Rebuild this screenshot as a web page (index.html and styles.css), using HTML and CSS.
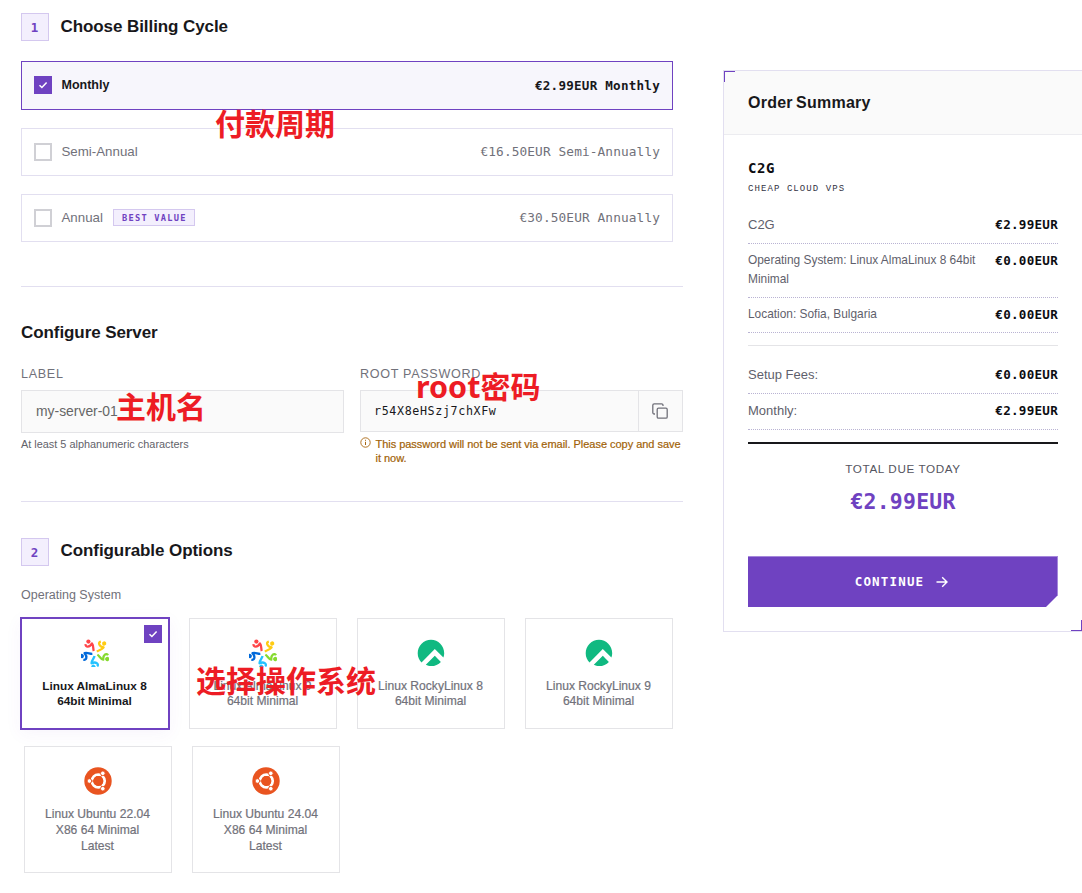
FILE: index.html
```html
<!DOCTYPE html>
<html lang="en">
<head>
<meta charset="utf-8">
<title>Configure Server</title>
<link rel="stylesheet" href="styles.css">
</head>
<body>
<svg class="defs" width="0" height="0" aria-hidden="true">
  <symbol id="check" viewBox="0 0 18 18"><path d="M5.5 9.2l2.4 2.3 4.7-5" fill="none" stroke="#fff" stroke-width="1.5"/></symbol>
  <symbol id="petal-shape" viewBox="0 0 28 28" overflow="visible"><circle cx="7.4" cy="2.6" r="2.1"/><path d="M4.600 5.200C4.200 8.400 8.600 8.600 11 4.400C12.800 6.400 11.800 9.600 12.800 12" fill="none" stroke="currentColor" stroke-width="2.300" stroke-linejoin="round"/></symbol>
  <symbol id="alma" viewBox="0 0 28 28">
    <use href="#petal-shape" width="28" height="28" fill="#ff4649" color="#ff4649"/>
    <use href="#petal-shape" width="28" height="28" fill="#ffcb12" color="#ffcb12" transform="rotate(72 14 14.4)"/>
    <use href="#petal-shape" width="28" height="28" fill="#86da2f" color="#86da2f" transform="rotate(144 14 14.4)"/>
    <use href="#petal-shape" width="28" height="28" fill="#24c2ff" color="#24c2ff" transform="rotate(216 14 14.4)"/>
    <use href="#petal-shape" width="28" height="28" fill="#0069da" color="#0069da" transform="rotate(288 14 14.4)"/>
  </symbol>
  <symbol id="rocky" viewBox="0 0 28 28"><path fill="#10b981" d="M26.400 18.400c.5-1.300.8-2.800.8-4.200C27.200 6.800 21.300.8 14 .8S.7 6.800.7 14.200c0 3.600 1.400 6.900 3.800 9.300L17.800 10.100z"/><path fill="#10b981" d="M23.900 22.900l-6.100-6.100-9 8.900c1.600.9 3.400 1.400 5.300 1.400 3.900 0 7.400-1.600 9.800-4.200z"/></symbol>
  <symbol id="ubuntu" viewBox="0 0 28 28">
    <circle cx="14" cy="14" r="13.700" fill="#e95420"/>
    <circle cx="14.300" cy="14" r="6.400" fill="none" stroke="#fff" stroke-width="2.700"/>
    <g stroke="#e95420" stroke-width="1"><path d="M14.300 14H4M14.300 14l5.300 9.200M14.300 14l5.300-9.200"/></g>
    <circle cx="14.300" cy="14" r="4.900" fill="#e95420"/>
    <g fill="#fff" stroke="#e95420" stroke-width=".9"><circle cx="5.400" cy="14" r="2.300"/><circle cx="18.800" cy="6.300" r="2.300"/><circle cx="18.800" cy="21.700" r="2.300"/></g>
  </symbol>
</svg>
<div class="page">
  <main class="main">
    <header class="step"><span class="num">1</span><h2>Choose Billing Cycle</h2></header>
    <div class="cycles">
      <div class="cycle active"><span class="box"><svg width="18" height="18"><use href="#check"/></svg></span><span class="name">Monthly</span><span class="price">€2.99EUR Monthly</span></div>
      <div class="cycle"><span class="box"></span><span class="name">Semi-Annual</span><span class="price">€16.50EUR Semi-Annually</span></div>
      <div class="cycle"><span class="box"></span><span class="name">Annual</span><span class="best">BEST VALUE</span><span class="price">€30.50EUR Annually</span></div>
    </div>
    <hr class="rule rule-a">
    <h2 class="server-title">Configure Server</h2>
    <div class="fields">
      <div class="field">
        <div class="label">LABEL</div>
        <div class="input">my-server-01</div>
        <div class="help">At least 5 alphanumeric characters</div>
      </div>
      <div class="field">
        <div class="label">ROOT PASSWORD</div>
        <div class="group">
          <div class="secret">r54X8eHSzj7chXFw</div>
          <div class="copy"><svg width="16" height="16" viewBox="0 0 16 16" fill="none" stroke="#71717a" stroke-width="1.300"><rect x="5.200" y="5.200" width="10" height="10" rx="1.300"/><path d="M3 11H2.200A1.400 1.400 0 0 1 .8 9.600V2.200A1.400 1.400 0 0 1 2.200.8h7.400A1.400 1.400 0 0 1 11 2.200V3"/></svg></div>
        </div>
        <div class="warn"><svg width="11" height="11" viewBox="0 0 11 11" fill="none" stroke="#a8650f"><circle cx="5.500" cy="5.500" r="4.700" stroke-width=".9"/><path d="M5.500 4.800v3.200M5.500 2.800v1"/></svg><p>This password will not be sent via email. Please copy and save<br>it now.</p></div>
      </div>
    </div>
    <hr class="rule">
    <header class="step step-b"><span class="num">2</span><h2>Configurable Options</h2></header>
    <div class="os-label">Operating System</div>
    <div class="cards">
      <div class="card chosen"><span class="tick"><svg width="18" height="18"><use href="#check"/></svg></span><svg class="logo"><use href="#alma"/></svg><p>Linux AlmaLinux 8<br>64bit Minimal</p></div>
      <div class="card"><svg class="logo"><use href="#alma"/></svg><p>Linux AlmaLinux 9<br>64bit Minimal</p></div>
      <div class="card"><svg class="logo"><use href="#rocky"/></svg><p>Linux RockyLinux 8<br>64bit Minimal</p></div>
      <div class="card"><svg class="logo"><use href="#rocky"/></svg><p>Linux RockyLinux 9<br>64bit Minimal</p></div>
    </div>
    <div class="cards cards-b">
      <div class="card"><svg class="logo"><use href="#ubuntu"/></svg><p>Linux Ubuntu 22.04<br>X86 64 Minimal<br>Latest</p></div>
      <div class="card"><svg class="logo"><use href="#ubuntu"/></svg><p>Linux Ubuntu 24.04<br>X86 64 Minimal<br>Latest</p></div>
    </div>
  </main>
  <aside class="summary">
    <h3>Order Summary</h3>
    <div class="content">
      <div class="product">C2G</div>
      <div class="group-name">CHEAP CLOUD VPS</div>
      <div class="line first"><span>C2G</span><b>€2.99EUR</b></div>
      <div class="line small"><span>Operating System: Linux AlmaLinux 8 64bit<br>Minimal</span><b>€0.00EUR</b></div>
      <div class="line small"><span>Location: Sofia, Bulgaria</span><b>€0.00EUR</b></div>
      <div class="fees">
        <div class="line fee"><span>Setup Fees:</span><b>€0.00EUR</b></div>
        <div class="line"><span>Monthly:</span><b>€2.99EUR</b></div>
      </div>
      <div class="total"><div class="due">TOTAL DUE TODAY</div><div class="amount">€2.99EUR</div></div>
      <div class="continue"><span>CONTINUE</span><svg width="12" height="12" viewBox="0 0 12 12" fill="none" stroke="#fff" stroke-width="1.400"><path d="M.5 6h10.500M6.200 1.200L11 6l-4.800 4.800"/></svg></div>
    </div>
  </aside>
  <div class="note note-cycle">付款周期</div>
  <div class="note note-host">主机名</div>
  <div class="note note-root"><span>root</span>密码</div>
  <div class="note note-os">选择操作系统</div>
</div>
</body>
</html>
```
FILE: styles.css
```css
* { box-sizing: border-box; }
body { margin: 0; background: #fff; color: #18181b; font-family: "Liberation Sans", sans-serif; }
h2, h3, p { margin: 0; }
.defs { position: absolute; }
.page { position: relative; display: flex; align-items: flex-start; width: 1082px; height: 893px; overflow: hidden; padding-left: 21px; white-space: nowrap; }
.main { width: 662px; flex: none; padding-top: 13px; }
.step { display: flex; align-items: center; gap: 12px; height: 28px; }
.num { width: 28px; height: 28px; border: 1px solid #d4c8ef; background: #f3effd; color: #6f42c1; font: bold 12.5px/27px "DejaVu Sans Mono", monospace; text-align: center; padding-right: 1px; }
h2 { font-size: 17px; line-height: 24px; font-weight: bold; letter-spacing: -0.08px; }
.step h2 { margin-left: -0.5px; }
.step-b h2 { margin-top: -2px; }
.cycles { display: flex; flex-direction: column; gap: 18px; width: 652px; margin-top: 20px; }
.cycle { display: flex; align-items: center; height: 48px; padding: 0 12px; border: 1px solid #e2dff0; color: #71717a; font-size: 13.3px; }
.cycle.active { height: 49px; border-color: #6f42c1; background: #f7f6fc; color: #18181b; }
.name { margin: -2px 0 0 -0.5px; }
.active .name { font-weight: bold; font-size: 12.5px; }
.box { width: 18px; height: 18px; border: 2px solid #d0d0d5; margin-right: 10px; }
.active .box { border: 0; background: #6f42c1; margin-top: -1px; }
.box svg, .tick svg { display: block; }
.best { margin-left: 10px; margin-top: -1px; height: 17px; width: 82px; border: 1px solid #d4c8ef; background: #f3effd; color: #6f42c1; font: bold 8.7px/16px "DejaVu Sans Mono", monospace; letter-spacing: 1.26px; padding-left: 8px; }
.price { margin-left: auto; margin-top: -1px; font-family: "DejaVu Sans Mono", monospace; font-size: 12.8px; letter-spacing: .1px; }
.active .price { font-weight: bold; font-size: 12.6px; letter-spacing: .23px; }
.rule { border: 0; height: 1px; background: #e2dff0; margin: 0; }
.rule-a { margin-top: 44px; }
.server-title { margin-top: 34px; }
.fields { display: grid; grid-template-columns: 323px 323px; gap: 16px; height: 136px; margin-top: 20px; }
.label { font-size: 12.6px; line-height: 18px; letter-spacing: .68px; color: #71717a; margin-bottom: 7px; }
.input { height: 43px; border: 1px solid #e4e4e7; background: #fafafa; padding-left: 14px; font-size: 13.9px; line-height: 41px; color: #666; }
.help { margin-top: 4px; font-size: 10.9px; line-height: 14px; color: #62626a; }
.group { display: flex; height: 42px; border: 1px solid #e4e4e7; background: #fafafa; }
.secret { flex: 1; padding-left: 13px; font: 11.7px/41px "DejaVu Sans Mono", monospace; letter-spacing: .62px; }
.copy { width: 44px; border-left: 1px solid #e4e4e7; display: grid; place-items: center; padding-right: 1px; }
.warn { display: flex; gap: 5px; margin-top: 5px; font-size: 11px; line-height: 14px; letter-spacing: -.03px; color: #a16207; }
.warn p { -webkit-text-stroke: .2px #a16207; margin-left: -0.5px; }
.warn svg { flex: none; }
.step-b { margin-top: 36px; }
.os-label { margin-top: 21px; font-size: 12.5px; line-height: 16px; color: #71717a; }
.cards { display: flex; gap: 20px; margin-top: 15px; }
.cards-b { margin-top: 17px; padding-left: 3px; }
.card { position: relative; width: 148px; height: 111px; border: 1px solid #e4e4e7; padding-top: 20px; text-align: center; font-size: 12.1px; line-height: 15px; color: #71717a; }
.card p { -webkit-text-stroke: .2px currentColor; margin-right: 1px; padding-top: 1px; }
.cards-b .card { height: 127px; line-height: 16px; }
.cards-b p { padding-top: 0; }
.chosen { width: 150px; height: 113px; margin: -1px; border: 2px solid #6f42c1; color: #18181b; font-weight: bold; font-size: 11.8px; box-shadow: 0 4px 16px rgba(111,66,193,.05); }
.chosen p { -webkit-text-stroke: 0; }
.tick { position: absolute; top: 6px; right: 6px; background: #6f42c1; }
.logo { display: block; width: 28px; height: 28px; margin: 0 auto 11px; }
.summary { position: relative; flex: none; width: 360px; height: 562px; margin: 70px 0 0 40px; border: 1px solid #e2dff0; }
.summary::before { content: ""; position: absolute; left: 0; top: 0; width: 10px; height: 10px; border: solid #6f42c1; border-width: 1px 0 0 1px; }
.summary::after { content: ""; position: absolute; right: 0; bottom: 0; width: 10px; height: 10px; border: solid #6f42c1; border-width: 0 1px 1px 0; }
h3 { height: 64px; background: #fafafa; border-bottom: 1px solid #ececf0; padding-left: 24px; font-size: 16px; line-height: 63px; letter-spacing: .25px; word-spacing: -1.5px; }
.content { padding: 24px 24px 0; }
.product { font: bold 14px/18px "DejaVu Sans Mono", monospace; letter-spacing: .57px; color: #0d0d12; }
.group-name { margin-top: 5px; font: 9px/14px "Liberation Mono", monospace; letter-spacing: 1.08px; color: #333344; }
.line { display: flex; justify-content: space-between; border-bottom: 1px dotted #b9b3d3; padding: 7px 0 9px; font-size: 13px; line-height: 19px; color: #5f5f6c; }
.line b { font-family: "DejaVu Sans Mono", monospace; font-size: 12.6px; letter-spacing: .25px; color: #0d0d12; }
.line.first { padding-top: 19px; }
.line.small { padding-bottom: 8px; }
.small span { font-size: 11.9px; }
.fees { margin-top: 12px; border-top: 1px solid #e4e4e7; }
.line.fee { padding-top: 19px; }
.total { margin-top: 12px; border-top: 2px solid #18181b; padding-top: 17px; text-align: center; }
.due { font-size: 11.7px; line-height: 16px; letter-spacing: .6px; color: #555560; }
.amount { margin-top: 11px; font: bold 21.5px/28px "DejaVu Sans Mono", monospace; letter-spacing: .2px; color: #6f42c1; }
.continue { display: flex; align-items: center; justify-content: center; gap: 12px; height: 51px; margin-top: 40px; padding-right: 3px; background: #6f42c1; color: #fff; font: bold 12.5px/20px "DejaVu Sans Mono", monospace; letter-spacing: 1.18px; clip-path: polygon(0 0, 100% 0, 100% calc(100% - 12px), calc(100% - 12px) 100%, 0 100%); box-shadow: inset -1px 1px #a587db; }
.note { position: absolute; color: #ed1c24; font: bold 30px/36px "Noto Sans CJK SC", sans-serif; }
.note span { font-family: "Noto Sans", sans-serif; font-size: 30.5px; }
.note-cycle { left: 215px; top: 104px; }
.note-host { left: 116px; top: 387px; }
.note-root { left: 416px; top: 367px; }
.note-os { left: 196px; top: 661px; }
```
